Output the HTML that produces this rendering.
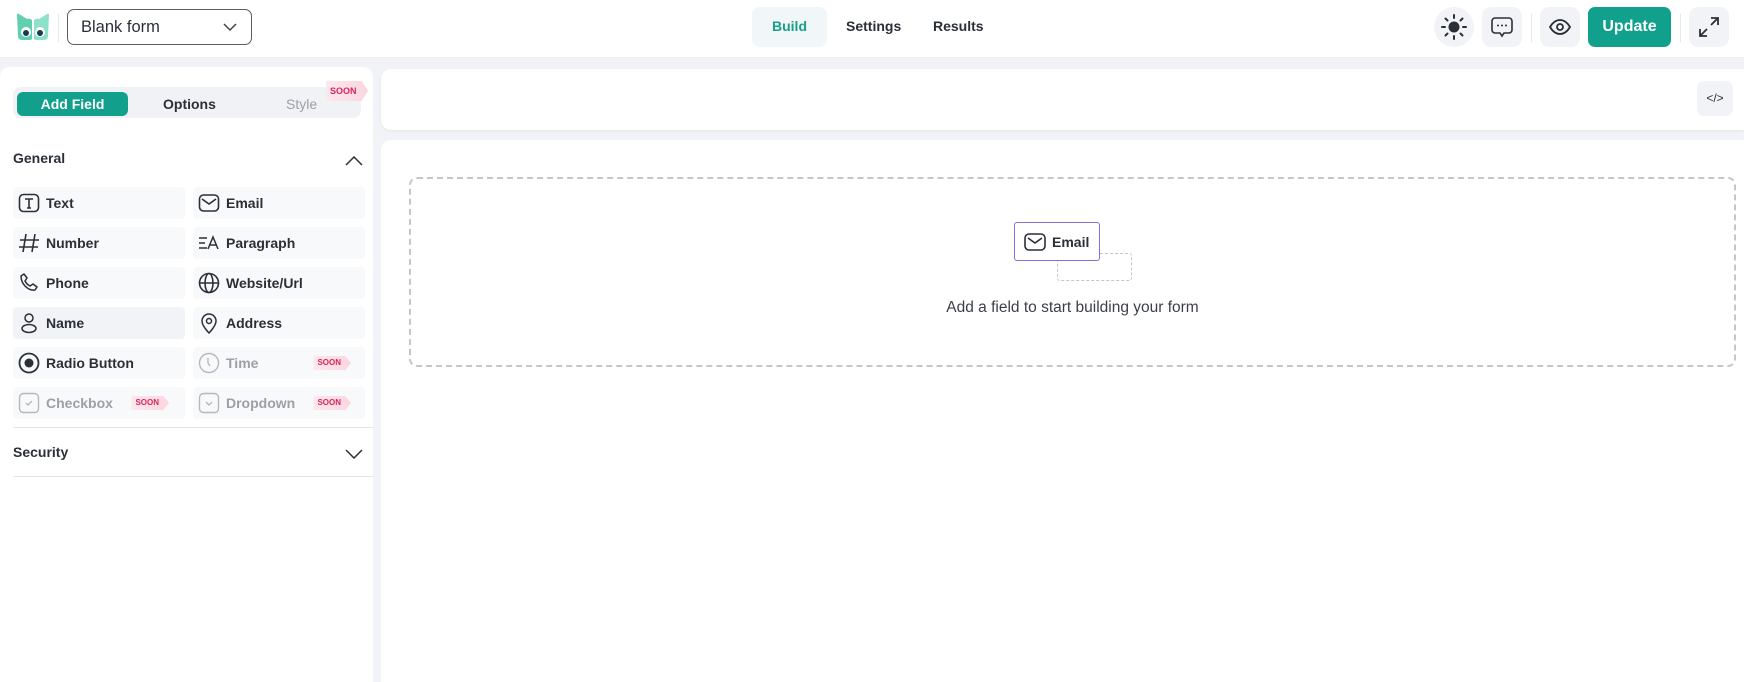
<!DOCTYPE html>
<html><head><meta charset="utf-8"><style>
*{box-sizing:border-box;margin:0;padding:0}
body{width:1744px;height:682px;overflow:hidden;background:#f2f3f7;font-family:"Liberation Sans",sans-serif;color:#2b2f38;position:relative}
.a{position:absolute}
.hdr{left:0;top:0;width:1744px;height:58px;background:#fff;border-bottom:1px solid #eceef2}
.ib{width:40px;height:40px;border-radius:9px;background:#f2f3f7;display:flex;align-items:center;justify-content:center}
.row{height:32px;border-radius:4px;background:#f8f9fa;display:flex;align-items:center;font-size:14px;font-weight:bold;color:#2b2f38}
.row svg{margin:0 6px 0 5px}
.dis{color:#9ca0a8}
.soon{position:absolute;right:14px;top:9px;height:14px;padding:0 10px 0 4px;background:linear-gradient(90deg,#fde8ee,#fbd6e0);font-size:8px;font-weight:bold;color:#d8245a;line-height:14px;clip-path:polygon(0 0,85% 0,100% 50%,85% 100%,0 100%)}
</style></head><body>
<div class="a hdr"></div>
<svg class="a" style="left:15px;top:12px" width="36" height="30" viewBox="0 0 36 30"><path d="M2 3 Q2 1 4 2 L12 7 Q15 6 17 8 L17 26 Q17 28 15 28 L7 28 Q3 28 3 24 Z" fill="#62cfae"/><path d="M34 3 Q34 1 32 2 L24 7 Q21 6 19 8 L19 26 Q19 28 21 28 L29 28 Q33 28 33 24 Z" fill="#8fe0c8"/><circle cx="11" cy="20" r="5" fill="#fff"/><circle cx="25" cy="20" r="5" fill="#fff"/><circle cx="11" cy="21" r="3" fill="#173c4a"/><circle cx="25" cy="21" r="3" fill="#173c4a"/></svg>
<div class="a" style="left:58px;top:14px;width:1px;height:28px;background:#e6e8ec"></div>
<div class="a" style="left:67px;top:9px;width:185px;height:36px;border:1px solid #5a5e66;border-radius:7px;font-size:16.5px;padding:8px 0 0 13px;color:#2b2f38">Blank form<svg class="a" style="right:14px;top:13px" width="14" height="9" viewBox="0 0 14 9"><path d="M1 1l6 6 6-6" fill="none" stroke="#444" stroke-width="1.5"/></svg></div>
<div class="a" style="left:752px;top:7px;width:75px;height:40px;border-radius:8px;background:#f1f6f8;color:#17a08a;font-weight:bold;font-size:14px;text-align:center;line-height:38px">Build</div>
<div class="a" style="left:846px;top:6px;font-size:14px;font-weight:bold;line-height:40px">Settings</div>
<div class="a" style="left:933px;top:6px;font-size:14px;font-weight:bold;line-height:40px">Results</div>
<div class="a ib" style="left:1434px;top:7px;border-radius:50%"><svg width="26" height="26" viewBox="0 0 26 26"><circle cx="13" cy="13" r="5.5" fill="#2b2f38"/><g stroke="#2b2f38" stroke-width="2" stroke-linecap="round"><path d="M13 1v3M13 22v3M1 13h3M22 13h3M4.5 4.5l2 2M19.5 19.5l2 2M4.5 21.5l2-2M19.5 6.5l2-2"/></g></svg></div>
<div class="a ib" style="left:1482px;top:7px"><svg width="24" height="24" viewBox="0 0 24 24"><path d="M5 3h14a3 3 0 0 1 3 3v9a3 3 0 0 1-3 3h-5l-2 3-2-3H5a3 3 0 0 1-3-3V6a3 3 0 0 1 3-3z" fill="none" stroke="#2b2f38" stroke-width="1.6"/><circle cx="8" cy="10.5" r="1" fill="#2b2f38"/><circle cx="12" cy="10.5" r="1" fill="#2b2f38"/><circle cx="16" cy="10.5" r="1" fill="#2b2f38"/></svg></div>
<div class="a" style="left:1531px;top:14px;width:1px;height:28px;background:#e6e8ec"></div>
<div class="a ib" style="left:1540px;top:7px"><svg width="24" height="24" viewBox="0 0 24 24"><path d="M2 12c3-5 6.5-7 10-7s7 2 10 7c-3 5-6.5 7-10 7s-7-2-10-7z" fill="none" stroke="#2b2f38" stroke-width="1.8"/><circle cx="12" cy="12" r="3" fill="none" stroke="#2b2f38" stroke-width="1.8"/></svg></div>
<div class="a" style="left:1588px;top:7px;width:83px;height:40px;border-radius:7px;background:#11a08c;color:#fff;font-weight:bold;font-size:16px;text-align:center;line-height:40px">Update</div>
<div class="a" style="left:1680px;top:14px;width:1px;height:28px;background:#e6e8ec"></div>
<div class="a ib" style="left:1689px;top:7px"><svg width="24" height="24" viewBox="0 0 24 24"><path d="M14 3h7v7M21 3l-7 7M10 21H3v-7M3 21l7-7" fill="none" stroke="#2b2f38" stroke-width="1.8"/></svg></div>

<div class="a" style="left:0;top:67px;width:373px;height:615px;background:#fff;border-radius:10px 10px 0 0"></div>
<div class="a" style="left:13px;top:87px;width:348px;height:31px;border-radius:8px;background:#f1f2f5"></div>
<div class="a" style="left:17px;top:92px;width:111px;height:24px;border-radius:6px;background:#12a08c;color:#fff;font-weight:bold;font-size:14px;text-align:center;line-height:24px">Add Field</div>
<div class="a" style="left:163px;top:92px;font-weight:bold;font-size:14px;line-height:24px">Options</div>
<div class="a" style="left:286px;top:92px;font-size:14px;line-height:24px;color:#9ca0a8">Style</div>
<div class="a" style="left:326px;top:81px;height:20px;width:42px;padding-left:4px;background:linear-gradient(90deg,#fde8ee,#fbd6e0);font-size:9px;font-weight:bold;color:#d8245a;line-height:20px;clip-path:polygon(0 0,85% 0,100% 50%,85% 100%,0 100%)">SOON</div>
<div class="a" style="left:13px;top:150px;font-size:14px;font-weight:bold;color:#2b2f38">General</div>
<svg class="a" style="left:345px;top:156px" width="18" height="10" viewBox="0 0 18 10"><path d="M1 9l8-8 8 8" fill="none" stroke="#2b2f38" stroke-width="1.5"/></svg>

<div class="a row" style="left:13px;top:187px;width:172px"><svg width="22" height="22" viewBox="0 0 22 22"><rect x="1.5" y="2.5" width="19" height="17" rx="4" fill="none" stroke="#2b2f38" stroke-width="1.6"/><path d="M7 7h8M11 7v9M9 16h4" stroke="#2b2f38" stroke-width="1.6"/></svg>Text</div>
<div class="a row" style="left:193px;top:187px;width:172px"><svg width="22" height="22" viewBox="0 0 22 22"><rect x="1.5" y="3" width="19" height="16" rx="4" fill="none" stroke="#2b2f38" stroke-width="1.6"/><path d="M4 7l7 5 7-5" fill="none" stroke="#2b2f38" stroke-width="1.6"/></svg>Email</div>
<div class="a row" style="left:13px;top:227px;width:172px"><svg width="22" height="22" viewBox="0 0 22 22"><path d="M8 2L5 20M17 2l-3 18M2 8h19M1 15h19" stroke="#2b2f38" stroke-width="1.6"/></svg>Number</div>
<div class="a row" style="left:193px;top:227px;width:172px"><svg width="22" height="22" viewBox="0 0 22 22"><path d="M1 6h8M1 11h6M1 16h8M10 17l5-12 5 12M12 13h6" fill="none" stroke="#2b2f38" stroke-width="1.5"/></svg>Paragraph</div>
<div class="a row" style="left:13px;top:267px;width:172px"><svg width="22" height="22" viewBox="0 0 22 22"><path d="M6 2l3 4-2 3c1 2 3 4 5 5l3-2 4 3-2 3C10 19 3 12 3 4z" fill="none" stroke="#2b2f38" stroke-width="1.5" stroke-linejoin="round"/></svg>Phone</div>
<div class="a row" style="left:193px;top:267px;width:172px"><svg width="22" height="22" viewBox="0 0 22 22"><circle cx="11" cy="11" r="9.5" fill="none" stroke="#2b2f38" stroke-width="1.6"/><ellipse cx="11" cy="11" rx="4" ry="9.5" fill="none" stroke="#2b2f38" stroke-width="1.6"/><path d="M1.5 11h19" stroke="#2b2f38" stroke-width="1.6"/></svg>Website/Url</div>
<div class="a row" style="left:13px;top:307px;width:172px;background:#f1f3f6"><svg width="22" height="22" viewBox="0 0 22 22"><circle cx="11" cy="6" r="4" fill="none" stroke="#2b2f38" stroke-width="1.5"/><ellipse cx="11" cy="16.5" rx="7" ry="4" fill="none" stroke="#2b2f38" stroke-width="1.5"/></svg>Name</div>
<div class="a row" style="left:193px;top:307px;width:172px"><svg width="22" height="22" viewBox="0 0 22 22"><path d="M11 21s-7-7-7-12a7 7 0 0 1 14 0c0 5-7 12-7 12z" fill="none" stroke="#2b2f38" stroke-width="1.5"/><circle cx="11" cy="9" r="2.5" fill="none" stroke="#2b2f38" stroke-width="1.5"/></svg>Address</div>
<div class="a row" style="left:13px;top:347px;width:172px"><svg width="22" height="22" viewBox="0 0 22 22"><circle cx="11" cy="11" r="9.5" fill="none" stroke="#2b2f38" stroke-width="1.8"/><circle cx="11" cy="11" r="4.5" fill="#2b2f38"/></svg>Radio Button</div>
<div class="a row dis" style="left:193px;top:347px;width:172px"><svg width="22" height="22" viewBox="0 0 22 22"><circle cx="11" cy="11" r="9.5" fill="none" stroke="#b5b8be" stroke-width="1.4"/><path d="M10 6v5l2 3" fill="none" stroke="#b5b8be" stroke-width="1.4"/></svg>Time<span class="soon">SOON</span></div>
<div class="a row dis" style="left:13px;top:387px;width:172px"><svg width="22" height="22" viewBox="0 0 22 22"><rect x="1.5" y="1.5" width="19" height="19" rx="4" fill="none" stroke="#b5b8be" stroke-width="1.4"/><path d="M8 11l2 2 4-4" fill="none" stroke="#b5b8be" stroke-width="1.4"/></svg>Checkbox<span class="soon" style="right:16px">SOON</span></div>
<div class="a row dis" style="left:193px;top:387px;width:172px"><svg width="22" height="22" viewBox="0 0 22 22"><rect x="1.5" y="1.5" width="19" height="19" rx="4" fill="none" stroke="#b5b8be" stroke-width="1.4"/><path d="M8 10l3 3 3-3" fill="none" stroke="#b5b8be" stroke-width="1.4"/></svg>Dropdown<span class="soon">SOON</span></div>
<div class="a" style="left:13px;top:427px;width:360px;height:1px;background:#e3e5e9"></div>
<div class="a" style="left:13px;top:444px;font-size:14px;font-weight:bold">Security</div>
<svg class="a" style="left:345px;top:449px" width="18" height="10" viewBox="0 0 18 10"><path d="M1 1l8 8 8-8" fill="none" stroke="#2b2f38" stroke-width="1.5"/></svg>
<div class="a" style="left:13px;top:476px;width:360px;height:1px;background:#e3e5e9"></div>

<div class="a" style="left:381px;top:69px;width:1363px;height:61px;background:#fff;border-radius:10px 0 0 10px;box-shadow:0 1px 3px rgba(0,0,0,.06)"></div>
<div class="a" style="left:1697px;top:81px;width:36px;height:35px;border-radius:7px;background:#f2f3f7;font-size:12px;text-align:center;line-height:35px;color:#2b2f38">&lt;/&gt;</div>
<div class="a" style="left:381px;top:140px;width:1363px;height:542px;background:#fff;border-radius:10px 0 0 0"></div>
<div class="a" style="left:409px;top:177px;width:1327px;height:190px;border:2px dashed #c4c6cb;border-radius:8px"></div>
<div class="a" style="left:1057px;top:253px;width:75px;height:28px;border:1px dashed #c4c6cb;border-radius:3px"></div>
<div class="a" style="left:1014px;top:222px;width:86px;height:39px;border:1px solid #8b6fd8;border-radius:3px;background:#fff;display:flex;align-items:center;font-size:14px;font-weight:bold;padding-left:9px"><svg width="22" height="20" viewBox="0 0 22 20" style="margin-right:6px"><rect x="1" y="2" width="20" height="16" rx="4" fill="none" stroke="#2b2f38" stroke-width="1.6"/><path d="M4 6l7 5 7-5" fill="none" stroke="#2b2f38" stroke-width="1.6"/></svg>Email</div>
<div class="a" style="left:409px;top:299px;width:1327px;text-align:center;font-size:15.5px;color:#3b3f48">Add a field to start building your form</div>
</body></html>
